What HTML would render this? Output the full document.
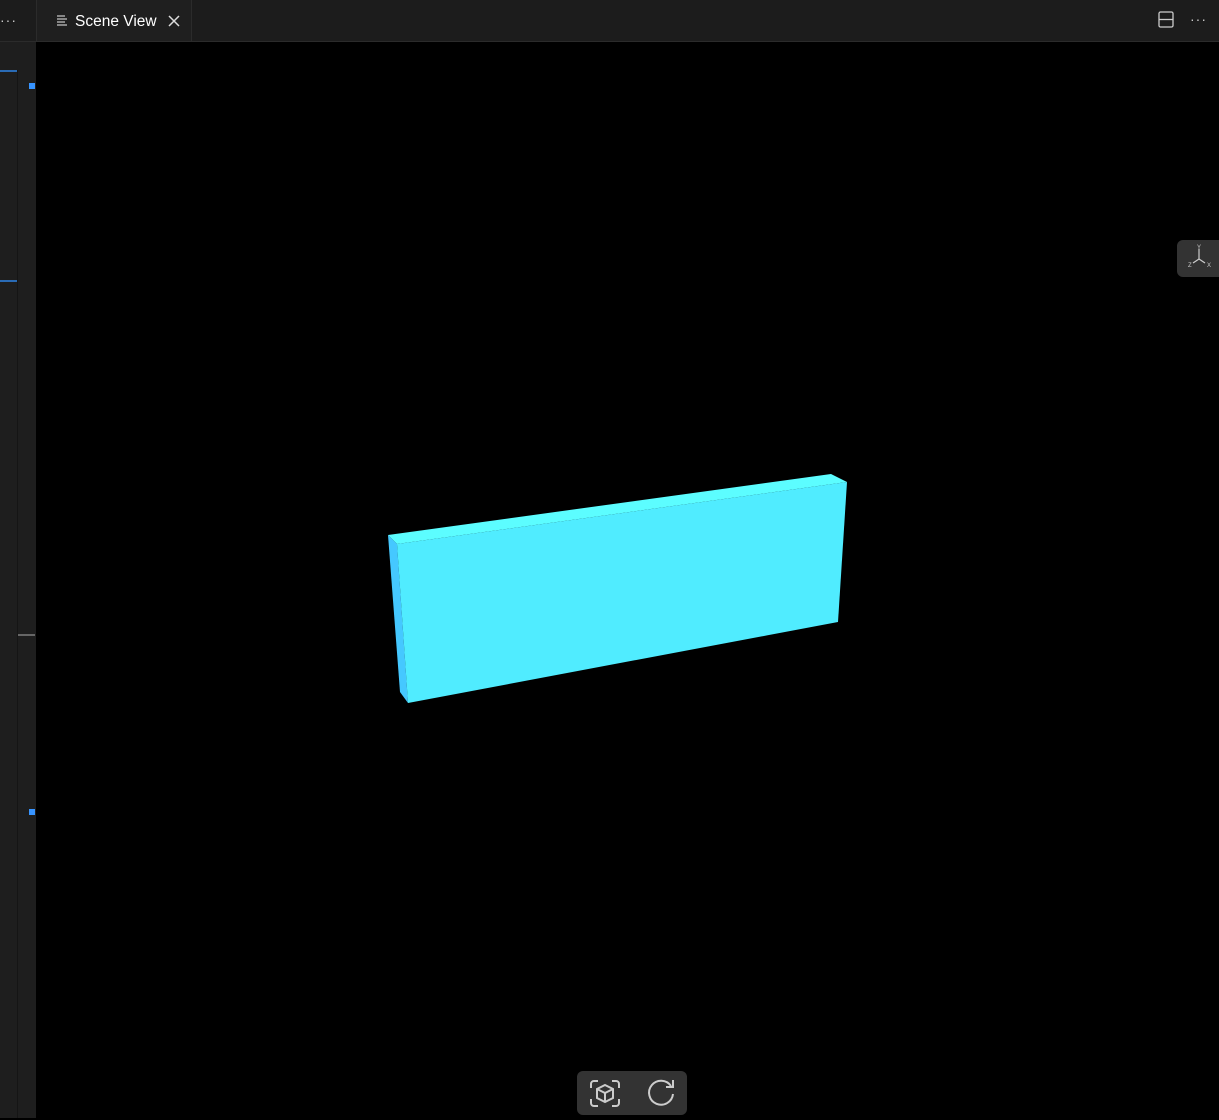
<!DOCTYPE html>
<html><head><style>
body{margin:0;width:1219px;height:1118px;background:#000;position:relative;overflow:hidden;font-family:"Liberation Sans",sans-serif}
.tabbar{position:absolute;left:0;top:0;width:1219px;height:41px;background:#1c1c1c;border-bottom:1px solid #2b2b2b}
.tab{position:absolute;left:36px;top:0;width:154px;height:41px;background:#1f1f1f;border-left:1px solid #2b2b2b;border-right:1px solid #2b2b2b;color:#fff;font-size:15.5px}
.side{position:absolute;left:0;top:42px;width:36px;height:1076px;background:#1e1e1e}
</style></head><body>
<div class="tabbar">
<div style="position:absolute;left:0;top:12px;color:#ccc;font-size:14px;letter-spacing:1px">···</div>
<div class="tab">
<svg style="position:absolute;left:20px;top:15px" width="10" height="12"><g stroke="#ccc" stroke-width="1.2"><line x1="0" y1="1" x2="8" y2="1"/><line x1="0" y1="4" x2="10" y2="4"/><line x1="0" y1="7" x2="8" y2="7"/><line x1="0" y1="10" x2="10" y2="10"/></g></svg>
<span style="position:absolute;left:38px;top:13px">Scene View</span>
<svg style="position:absolute;left:131px;top:15px" width="12" height="12"><path d="M1 1L11 11M11 1L1 11" stroke="#ddd" stroke-width="1.5"/></svg>
</div>
<svg style="position:absolute;left:1158px;top:11px" width="17" height="17"><rect x="1" y="1" width="14" height="15" rx="1.5" fill="none" stroke="#ccc" stroke-width="1.3"/><line x1="1" y1="8.5" x2="15" y2="8.5" stroke="#ccc" stroke-width="1.3"/></svg>
<div style="position:absolute;left:1190px;top:11px;color:#ccc;font-size:14px;letter-spacing:1px">···</div>
</div>
<div class="side">
<div style="position:absolute;left:17px;top:28px;width:1px;height:1048px;background:#151515"></div>
<div style="position:absolute;left:0;top:28px;width:17px;height:2px;background:#2a6bb5"></div>
<div style="position:absolute;left:0;top:238px;width:17px;height:2px;background:#2a6bb5"></div>
<div style="position:absolute;left:29px;top:41px;width:6px;height:6px;background:#3794ff"></div>
<div style="position:absolute;left:29px;top:767px;width:6px;height:6px;background:#3794ff"></div>
<div style="position:absolute;left:18px;top:592px;width:17px;height:2px;background:#666"></div>
</div>
<svg style="position:absolute;left:0;top:0" width="1219" height="1118">
<polygon points="388,535 831,474 847,482 397,544" fill="#5cfdff"/>
<polygon points="388,535 397,544 408,703 400,692" fill="#45c8ff"/>
<polygon points="397,544 847,482 838,622 408,703" fill="#50ecff"/>
</svg>
<div style="position:absolute;left:1177px;top:240px;width:42px;height:37px;background:#333;border-radius:6px 0 0 6px">
<svg width="42" height="37"><g stroke="#ccc" stroke-width="1.2"><line x1="22" y1="9" x2="22" y2="19"/><line x1="22" y1="19" x2="16" y2="23"/><line x1="22" y1="19" x2="28" y2="23"/></g>
<text x="20" y="9" font-size="6" fill="#ccc" font-family="Liberation Sans">Y</text><text x="11" y="27" font-size="6" fill="#ccc" font-family="Liberation Sans">Z</text><text x="30" y="27" font-size="6" fill="#ccc" font-family="Liberation Sans">X</text></svg>
</div>
<div style="position:absolute;left:577px;top:1071px;width:110px;height:44px;background:#333;border-radius:6px">
<svg width="110" height="44"><g fill="none" stroke="#ccc" stroke-width="2">
<path d="M14 17v-4a3 3 0 0 1 3-3h4M35 10h4a3 3 0 0 1 3 3v4M42 28v4a3 3 0 0 1-3 3h-4M21 35h-4a3 3 0 0 1-3-3v-4"/>
<path d="M28 14l8 4v9l-8 4-8-4v-9z M20 18l8 4 8-4 M28 22v9"/>
<path d="M94 15a12 12 0 1 0 2 8"/><path d="M96 9v7h-7"/></g></svg>
</div>
</body></html>
